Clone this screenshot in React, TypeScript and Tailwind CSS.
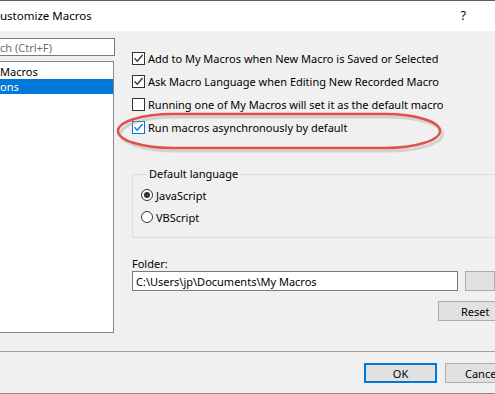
import React from 'react';

const font = { fontFamily: '"Noto Sans", "Segoe UI", sans-serif' };

const CheckRow: React.FC<{ label: string; checked?: boolean; focused?: boolean }> = ({ label, checked, focused }) => (
  <div className="flex h-[23px] items-center">
    <span
      className={`flex h-[13px] w-[13px] items-center justify-center border bg-white ${focused ? 'border-[#0078d7]' : 'border-[#333333]'}`}
    >
      {checked && (
        <svg width="11" height="11" viewBox="0 0 11 11">
          <path d="M1.5 5.3 L4.2 8.2 L9.6 2" fill="none" stroke={focused ? '#0078d7' : '#333333'} strokeWidth="1.3" />
        </svg>
      )}
    </span>
    <span className="ml-[3px] text-[11px] leading-none text-black">{label}</span>
  </div>
);

const RadioRow: React.FC<{ label: string; checked?: boolean }> = ({ label, checked }) => (
  <div className="flex h-[22px] items-center">
    <span className="flex h-[12px] w-[12px] items-center justify-center rounded-full border border-[#333333] bg-white">
      {checked && <span className="h-[6px] w-[6px] rounded-full bg-[#333333]" />}
    </span>
    <span className="ml-[3px] text-[11px] leading-none text-black">{label}</span>
  </div>
);

const App: React.FC = () => {
  return (
    <div className="relative h-[394px] w-[495px] overflow-hidden bg-[#f0f0f0]" style={font}>
      {/* top edge */}
      <div className="h-[1px] bg-[#5f5f5f]" />

      {/* title bar */}
      <div className="flex h-[30px] items-center justify-between bg-white pr-[29px]">
        <span className="text-[11.5px] text-black">ustomize Macros</span>
        <span className="text-[12px] text-black">?</span>
      </div>

      {/* body */}
      <div className="flex h-[321px] border-b border-[#a0a0a0]">
        {/* left column */}
        <div className="w-[115px] pt-[7px]">
          <div className="flex h-[18px] items-center border border-l-0 border-[#7a7a7a] bg-white">
            <span className="text-[11px] leading-none text-[#6d6d6d]">ch (Ctrl+F)</span>
          </div>
          <div className="mt-[5px] h-[272px] w-[114px] border border-l-0 border-[#828790] bg-white pt-[1px]">
            <div className="flex h-[16px] items-center text-[11px] leading-none text-black">Macros</div>
            <div className="flex h-[15px] items-center bg-[#0078d7] text-[11px] leading-none text-white">ons</div>
          </div>
        </div>

        {/* right column */}
        <div className="w-[380px] shrink-0 pl-[17px] pt-[16px]">
          <CheckRow label="Add to My Macros when New Macro is Saved or Selected" checked />
          <CheckRow label="Ask Macro Language when Editing New Recorded Macro" checked />
          <CheckRow label="Running one of My Macros will set it as the default macro" />
          <CheckRow label="Run macros asynchronously by default" checked focused />

          <fieldset className="mt-[27px] w-[380px] border border-[#dcdcdc] pb-[9px] pl-[8px]">
            <legend className="ml-[6px] px-[2px] text-[11px] leading-[16px] text-black">Default language</legend>
            <div className="mt-[2px]">
              <RadioRow label="JavaScript" checked />
              <RadioRow label="VBScript" />
            </div>
          </fieldset>

          <div className="mt-[18px] h-[15px] text-[11px] leading-[15px] text-black">Folder:</div>
          <div className="flex">
            <div className="flex h-[20px] w-[353px] items-center border border-[#7a7a7a] bg-white pl-[3px]">
              <span className="text-[11px] leading-none text-black">C:\Users\jp\Documents\My Macros</span>
            </div>
            <div className="ml-[7px] h-[20px] w-[30px] shrink-0 border border-[#adadad] bg-[#e1e1e1]" />
          </div>
          <div className="mt-[10px] flex">
            <div className="ml-[306px] flex h-[20px] w-[75px] shrink-0 items-center border border-[#adadad] bg-[#e1e1e1] pl-[22px]">
              <span className="text-[11px] leading-none text-black">Reset</span>
            </div>
          </div>
        </div>
      </div>

      {/* footer */}
      <div className="flex h-[41px] items-start pl-[364px] pt-[11px]">
        <div className="flex h-[20px] w-[73px] shrink-0 items-center justify-center border-2 border-[#0078d7] bg-[#e1e1e1]">
          <span className="text-[11px] leading-none text-black">OK</span>
        </div>
        <div className="ml-[8px] flex h-[20px] w-[75px] shrink-0 items-center border border-[#adadad] bg-[#e1e1e1] pl-[19px]">
          <span className="text-[11px] leading-none text-black">Cancel</span>
        </div>
      </div>
      <div className="h-[1px] bg-[#8a8a8a]" />

      {/* red annotation */}
      <svg className="pointer-events-none absolute left-[114px] top-[110px]" width="332" height="44" viewBox="0 0 332 44">
        <rect x="5" y="5" width="322" height="34" rx="55" ry="17" fill="none" stroke="#9a9a9a" strokeOpacity="0.35" strokeWidth="3" transform="translate(1.5 2)" />
        <rect x="4" y="4" width="322" height="34" rx="55" ry="17" fill="none" stroke="#e2504a" strokeWidth="2.5" />
      </svg>
    </div>
  );
};

export default App;
